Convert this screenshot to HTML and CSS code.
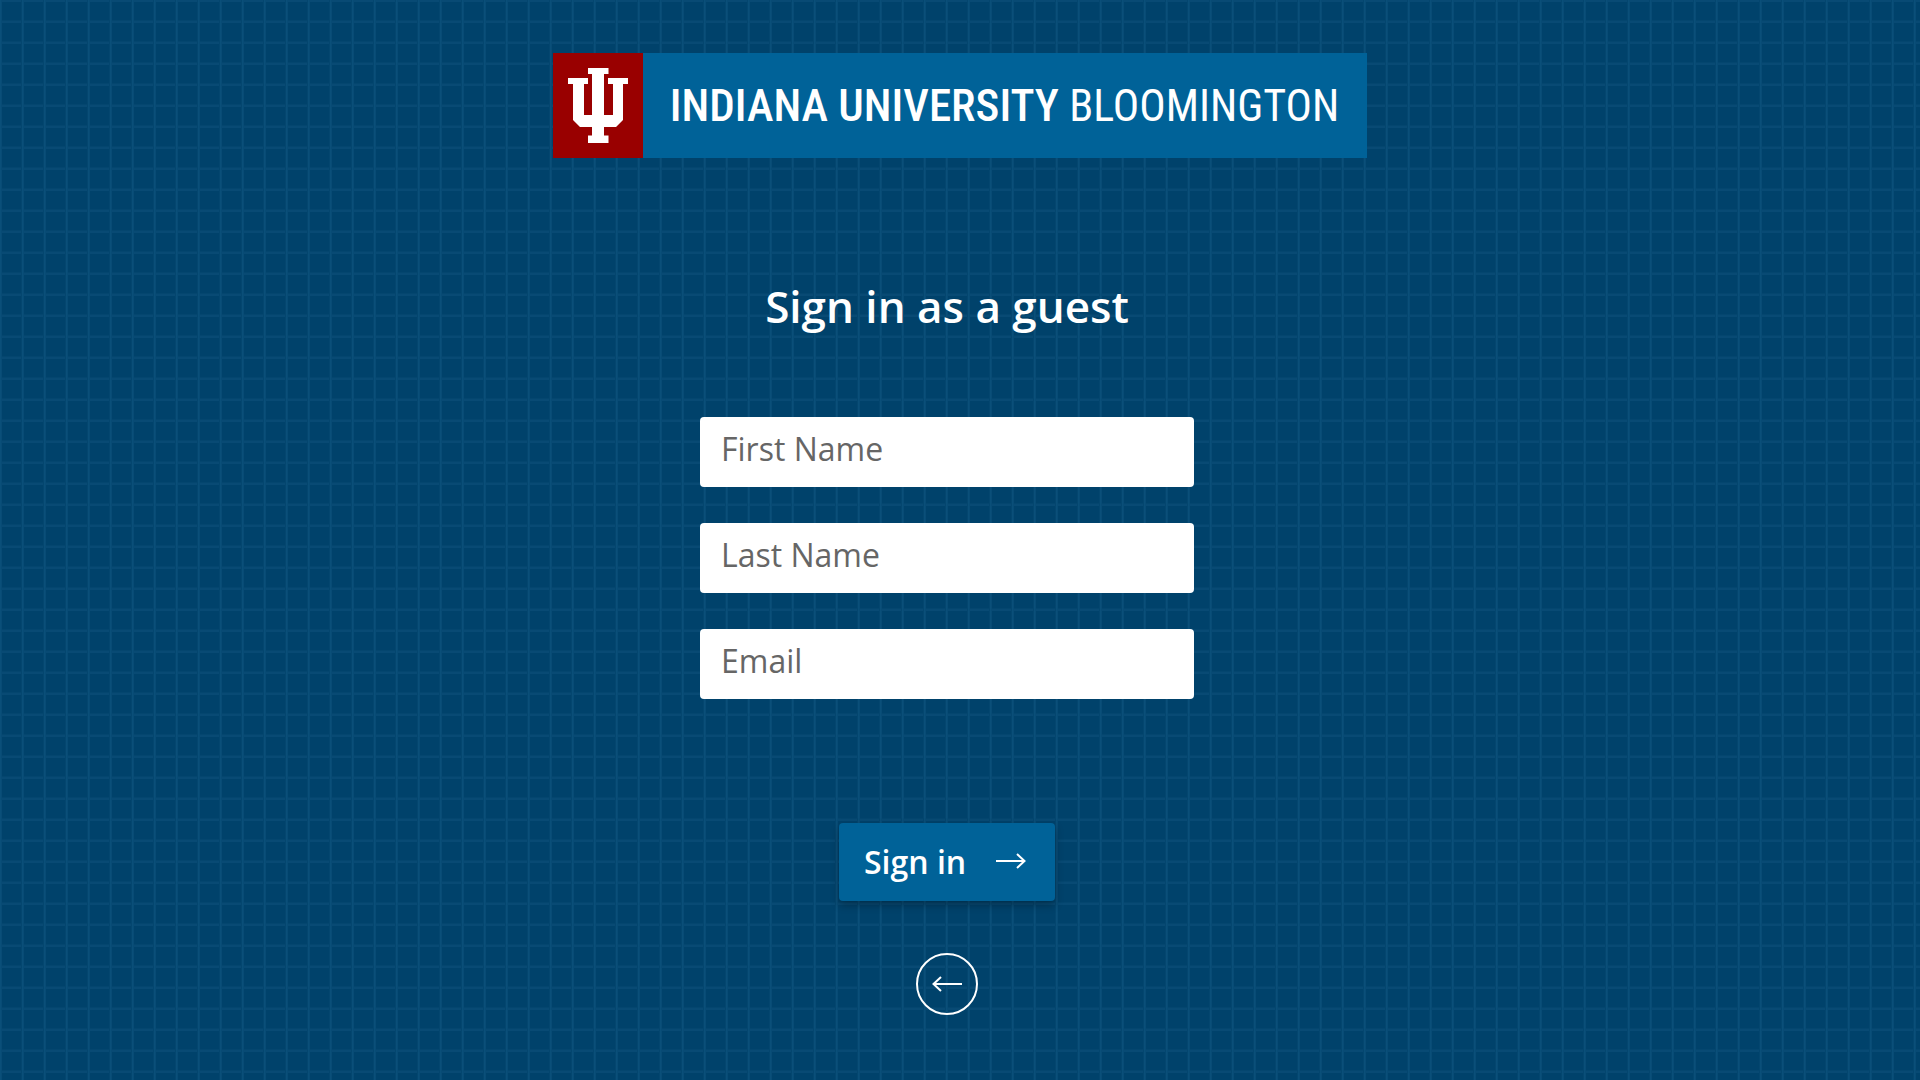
FILE: index.html
```
<!DOCTYPE html>
<html lang="en">
<head>
  <meta charset="utf-8">
  <meta name="viewport" content="width=device-width, initial-scale=1">
  <title>Sign in as a guest - Indiana University Bloomington</title>
  <link rel="stylesheet" href="styles.css">
</head>
<body class="page">
  <header class="brand">
    <svg class="brand-mark" viewBox="0 0 90 105" aria-hidden="true">
      <path d="M35 15H55.500V21H51V62H60V31H55V25H75V31H70V67L63 74H51V82.500H55.500V90H35V82.500H39V74H27L20 67V31H15V25H35V31H31V62H39V21H35Z"/>
    </svg>
    <p class="brand-name"><strong>INDIANA UNIVERSITY</strong> <span>BLOOMINGTON</span></p>
  </header>

  <main class="guest">
    <h1 class="guest-title">Sign in as a guest</h1>
    <form class="guest-form">
      <input class="field" type="text" placeholder="First Name" aria-label="First Name">
      <input class="field" type="text" placeholder="Last Name" aria-label="Last Name">
      <input class="field" type="email" placeholder="Email" aria-label="Email">
      <button class="submit" type="submit">
        Sign in
        <svg class="arrow" viewBox="0 0 30 16" aria-hidden="true">
          <path d="M0 8H29M21 1L28.500 8L21 15"/>
        </svg>
      </button>
    </form>
    <a class="back" href="#" aria-label="Back">
      <svg class="arrow" viewBox="0 0 30 16" aria-hidden="true">
        <path d="M30 8H1M9 1L1.500 8L9 15"/>
      </svg>
    </a>
  </main>
</body>
</html>
```
FILE: styles.css
```
*,
*::before,
*::after {
  box-sizing: border-box;
}

.page {
  min-height: 100vh;
  margin: 0;
  padding-top: 53px;
  color: #fff;
  font-family: "Open Sans", "Noto Sans", sans-serif;
  background-color: #00426b;
  background-image:
    linear-gradient(90deg, #0a4f79 1px, #084b75 1px, #084b75 2px, transparent 2px, transparent 21px, #04466f 21px),
    linear-gradient(#084a74 1px, #084a74 2px, transparent 2px, transparent 20px, #04466f 20px);
  background-size: 22px 21px;
}

.brand {
  display: flex;
  width: fit-content;
  max-width: 100%;
  margin: 0 auto;
  background: #006298;
}

.brand-mark {
  flex: none;
  width: 90px;
  height: 105px;
  background: #900;
  fill: #fff;
}

.brand-name {
  align-self: center;
  margin: 0;
  padding: 0 28px 0 27px;
  font-family: "Roboto Condensed", Roboto, sans-serif;
  font-size: 45px;
  line-height: 56px;
}

.brand-name strong {
  font-weight: 500;
}

.brand-name span {
  font-size: 44px;
  font-weight: 400;
}

.guest {
  display: flex;
  flex-direction: column;
  align-items: center;
  padding: 118px 26px 64px 0;
}

.guest-title {
  margin: 0 0 80px;
  font-size: 44px;
  font-weight: 600;
  line-height: 61px;
}

.guest-form {
  display: flex;
  flex-direction: column;
  align-items: center;
  gap: 36px;
  width: 100%;
  max-width: 494px;
}

.field {
  width: 100%;
  height: 70px;
  padding: 0 21px 7px;
  border: 0;
  border-radius: 4px;
  background: #fff;
  color: #333;
  font: 400 32px "Open Sans", "Noto Sans", sans-serif;
}

.field::placeholder {
  color: #666;
  opacity: 1;
}

.submit {
  display: flex;
  align-items: center;
  justify-content: space-between;
  width: 216px;
  height: 78px;
  margin-top: 88px;
  padding: 0 29px 2px 25px;
  border: 0;
  border-radius: 4px;
  background: #006298;
  box-shadow: 0 4px 8px rgba(0, 0, 0, 0.3);
  color: #fff;
  font: 600 32px "Open Sans", "Noto Sans", sans-serif;
  cursor: pointer;
}

.arrow {
  width: 30px;
  height: 16px;
  fill: none;
  stroke: #fff;
  stroke-width: 2;
}

.back {
  display: grid;
  place-items: center;
  width: 62px;
  height: 62px;
  margin-top: 52px;
  border: 2px solid #fff;
  border-radius: 50%;
}
```
